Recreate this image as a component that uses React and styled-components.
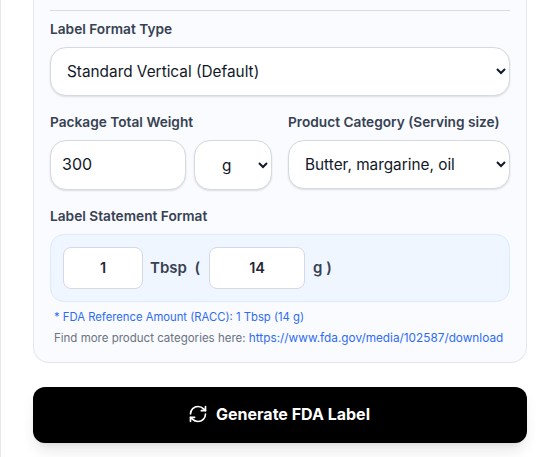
import React from "react";
import styled, { createGlobalStyle } from "styled-components";
import { RefreshCw } from "lucide-react";

const GlobalStyle = createGlobalStyle`
  html, body {
    margin: 0;
    padding: 0;
    height: 457px;
    overflow: hidden;
    background: #fff;
  }
  * {
    box-sizing: border-box;
  }
`;

const Page = styled.div`
  height: 457px;
  padding-left: 32px;
  border-left: 1px solid #e5e7eb;
  font-family: Inter, "Liberation Sans", sans-serif;
`;
const Card = styled.section`
  width: 494px;
  height: 363px;
  padding: 10px 16px 0;
  background: #f9fbff;
  border: 1px solid #e5e7eb;
  border-top: 0;
  border-radius: 0 0 16px 16px;
`;
const Divider = styled.hr`
  margin: 0 0 10px;
  border: 0;
  border-top: 1px solid #d9dce3;
`;
const Label = styled.label`
  display: block;
  height: 17px;
  margin-bottom: 9px;
  font-size: 13.7px;
  line-height: 17px;
  font-weight: 600;
  color: #374151;
  white-space: nowrap;
`;
const Select = styled.select`
  display: block;
  width: ${(p) => p.$width};
  height: ${(p) => p.$height || "49px"};
  padding: 0 0 0 ${(p) => p.$pad || "12px"};
  background-color: #fff;
  border: 1px solid #d5d9e0;
  border-radius: 16px;
  box-shadow: 0 1px 2px rgba(0, 0, 0, 0.12);
  font-family: inherit;
  font-size: 15.35px;
  color: #111827;
`;
const Row = styled.div`
  display: flex;
  gap: 16px;
  margin-top: ${(p) => p.$top};
`;
const Field = styled.div`
  width: ${(p) => p.$width};
`;
const Controls = styled.div`
  display: flex;
  gap: 8px;
`;
const WeightInput = styled.input`
  width: 136px;
  height: 50px;
  padding: 0 12px 2px 11px;
  background: #fff;
  border: 1px solid #d5d9e0;
  border-radius: 16px;
  box-shadow: 0 1px 2px rgba(0, 0, 0, 0.12);
  font-family: inherit;
  font-size: 16px;
  color: #111827;
`;
const StatementLabel = styled(Label)`
  margin-top: 18px;
`;
const Statement = styled.div`
  display: flex;
  align-items: center;
  height: 68px;
  padding: 0 12px;
  background: #eff6ff;
  border: 1px solid #dbeafe;
  border-radius: 14px;
`;
const AmountInput = styled.input`
  width: ${(p) => p.$width};
  height: 42px;
  padding: 0 0 2px;
  background: #fff;
  border: 1px solid #d5d9e0;
  border-radius: 8px;
  text-align: center;
  font-family: inherit;
  font-size: 14.5px;
  font-weight: 600;
  color: #1f2937;
`;
const Unit = styled.span`
  margin: ${(p) => p.$margin};
  padding-bottom: 2px;
  font-size: 15px;
  font-weight: 600;
  color: #374151;
  white-space: pre;
`;
const Note = styled.p`
  margin: ${(p) => p.$top} 0 0 4px;
  font-size: ${(p) => p.$size};
  line-height: 14px;
  color: ${(p) => p.$color};
  white-space: nowrap;
`;
const DocLink = styled.a`
  font-size: 11.8px;
  color: #2f6bf0;
  text-decoration: none;
`;
const Generate = styled.button`
  display: flex;
  align-items: center;
  justify-content: center;
  gap: 8px;
  width: 494px;
  height: 56px;
  margin-top: 24px;
  padding: 0 2px 2px 0;
  background: #000;
  border: 0;
  border-radius: 12px;
  box-shadow: 0 10px 15px -3px rgba(0, 0, 0, 0.1), 0 4px 6px -4px rgba(0, 0, 0, 0.1);
  font-family: inherit;
  font-size: 16px;
  font-weight: 700;
  color: #fff;
`;

export default function App() {
  return (
    <Page>
      <GlobalStyle />
      <Card>
        <Divider />
        <Label>Label Format Type</Label>
        <Select $width="100%" $pad="12px" defaultValue="standard">
          <option value="standard">Standard Vertical (Default)</option>
        </Select>
        <Row $top="18px">
          <Field $width="222px">
            <Label>Package Total Weight</Label>
            <Controls>
              <WeightInput defaultValue="300" />
              <Select $width="78px" $height="50px" $pad="23px" defaultValue="g">
                <option value="g">g</option>
              </Select>
            </Controls>
          </Field>
          <Field $width="222px">
            <Label>Product Category (Serving size)</Label>
            <Select $width="100%" defaultValue="butter">
              <option value="butter">Butter, margarine, oil</option>
            </Select>
          </Field>
        </Row>
        <StatementLabel>Label Statement Format</StatementLabel>
        <Statement>
          <AmountInput $width="80px" defaultValue="1" />
          <Unit $margin="0 9px 0 7px">Tbsp  (</Unit>
          <AmountInput $width="96px" defaultValue="14" />
          <Unit $margin="0 0 0 8px">g )</Unit>
        </Statement>
        <Note $top="8px" $size="11.27px" $color="#2f6bf0">* FDA Reference Amount (RACC): 1 Tbsp (14 g)</Note>
        <Note $top="7px" $size="11.5px" $color="#6b7280">
          Find more product categories here:{" "}
          <DocLink href="#download">https://www.fda.gov/media/102587/download</DocLink>
        </Note>
      </Card>
      <Generate>
        <RefreshCw size={20} strokeWidth={2} />
        Generate FDA Label
      </Generate>
    </Page>
  );
}
